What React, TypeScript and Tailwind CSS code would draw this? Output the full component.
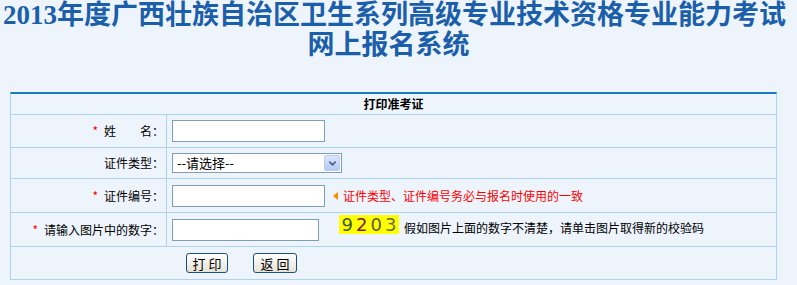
import { ChevronDown } from "lucide-react";

const font = { fontFamily: '"Noto Sans CJK SC", "Liberation Sans", sans-serif' };

const Star = () => <span className="text-[#ff0000] mr-[6px]">*</span>;

const App = () => {
  return (
    <div className="h-[285px] w-[797px] bg-[#eef4fc] text-[12px] text-black" style={font}>
      {/* Title */}
      <div
        className="w-[789px] text-center text-[27px] leading-[30px] font-bold text-[#1b5fab] whitespace-nowrap"
        style={{ fontFamily: '"Liberation Serif", "Noto Sans CJK SC", serif' }}
      >
        <div>2013年度广西壮族自治区卫生系列高级专业技术资格专业能力考试</div>
        <div className="pr-[12px]">网上报名系统</div>
      </div>

      {/* Form table */}
      <div className="ml-[10px] mt-[32px] w-[767px] border-x border-b border-[#aad5ec] border-t-2 border-t-[#1a7dbb]">
        <div className="h-[20px] flex items-center justify-center font-bold">打印准考证</div>

        <div className="h-[33px] flex border-t border-[#aad5ec]">
          <div className="w-[156px] border-r border-[#aad5ec] flex items-center justify-end pr-[2px]">
            <Star />姓　　名：
          </div>
          <div className="flex-1 flex items-center pl-[5px]">
            <input className="w-[153px] h-[22px] border border-[#7f9db9] bg-white outline-none" />
          </div>
        </div>

        <div className="h-[31px] flex border-t border-[#aad5ec]">
          <div className="w-[156px] border-r border-[#aad5ec] flex items-center justify-end pr-[2px]">
            证件类型：
          </div>
          <div className="flex-1 flex items-center pl-[5px]">
            <div className="w-[170px] h-[20px] border border-[#7f9db9] bg-white flex items-center justify-between pl-[4px] pr-px">
              <span className="text-[13px]">--请选择--</span>
              <span className="w-[16px] h-[16px] rounded-[2px] border border-[#b8cdf6] bg-gradient-to-b from-[#dbe6fd] to-[#b5c9f5] flex items-center justify-center">
                <ChevronDown className="w-[11px] h-[11px] text-[#4d6185]" strokeWidth={3.5} />
              </span>
            </div>
          </div>
        </div>

        <div className="h-[34px] flex border-t border-[#aad5ec]">
          <div className="w-[156px] border-r border-[#aad5ec] flex items-center justify-end pr-[2px]">
            <Star />证件编号：
          </div>
          <div className="flex-1 flex items-center pl-[5px]">
            <input className="w-[153px] h-[22px] border border-[#7f9db9] bg-white outline-none" />
            <span className="ml-[8px] w-0 h-0 border-y-[4px] border-y-transparent border-r-[5px] border-r-[#ff8a00]" />
            <span className="ml-[5px] text-[#ff0000]">证件类型、证件编号务必与报名时使用的一致</span>
          </div>
        </div>

        <div className="h-[34px] flex border-t border-[#aad5ec]">
          <div className="w-[156px] border-r border-[#aad5ec] flex items-center justify-end pr-[2px]">
            <Star />请输入图片中的数字：
          </div>
          <div className="flex-1 flex items-center pl-[5px]">
            <input className="w-[147px] h-[22px] border border-[#7f9db9] bg-white outline-none" />
            <div className="ml-[20px] self-start mt-[2px] flex items-end">
              <span
                className="w-[60px] h-[19px] bg-[#ffff00] flex items-center justify-center text-[18px] tracking-[3px] pl-[3px]"
                style={{ fontFamily: '"DejaVu Sans", sans-serif' }}
              >
                <span className="text-[#3d5a22]">9</span>
                <span className="text-[#7b2042]">2</span>
                <span className="text-[#5a5a1c]">0</span>
                <span className="text-[#6e6a2a]">3</span>
              </span>
              <span className="ml-[5px] leading-[14px] -mb-[1px]">假如图片上面的数字不清楚，请单击图片取得新的校验码</span>
            </div>
          </div>
        </div>

        <div className="h-[33px] flex items-center border-t border-[#aad5ec] pl-[175px] gap-[25px]">
          <button className="w-[42px] h-[20px] rounded-[3px] border border-[#1d4f7e] bg-gradient-to-b from-white to-[#e6e3d6] text-[13px] leading-none tracking-[3px] pl-[3px]">
            打印
          </button>
          <button className="w-[44px] h-[20px] rounded-[3px] border border-[#1d4f7e] bg-gradient-to-b from-white to-[#e6e3d6] text-[13px] leading-none tracking-[3px] pl-[3px]">
            返回
          </button>
        </div>
      </div>
    </div>
  );
};

export default App;
